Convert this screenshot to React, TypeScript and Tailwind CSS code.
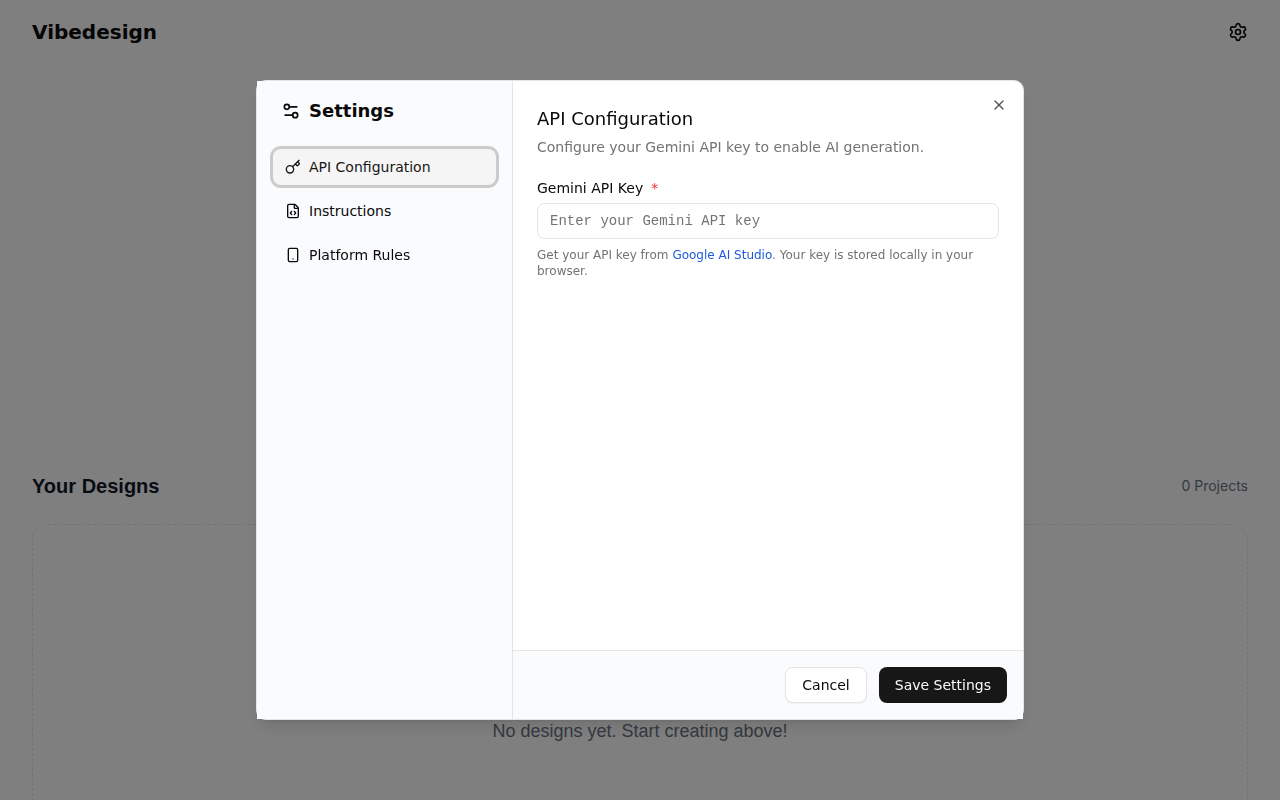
import { useState } from "react";
import { FileCode, Key, Settings, Settings2, Smartphone, X } from "lucide-react";
import clsx from "clsx";

const tabs = [
  { id: "api", label: "API Configuration", icon: Key },
  { id: "instructions", label: "Instructions", icon: FileCode },
  { id: "platform", label: "Platform Rules", icon: Smartphone },
];

const HomePage = () => {
  return (
    <div className="flex h-screen flex-col overflow-hidden bg-white">
      <header className="flex h-16 shrink-0 items-center justify-between px-8">
        <h1 className="text-xl font-bold text-neutral-950">Vibedesign</h1>
        <button type="button" aria-label="Open settings">
          <Settings size={20} className="text-neutral-950" />
        </button>
      </header>
      <div className="h-[408px] shrink-0" />
      <section className="px-8 font-['Liberation_Sans',sans-serif]">
        <div className="mb-6 flex items-center justify-between">
          <h2 className="text-xl font-bold text-gray-900">Your Designs</h2>
          <span className="font-['Inter',sans-serif] text-sm text-gray-500">
            0 Projects
          </span>
        </div>
        <div className="flex h-[414px] items-center justify-center rounded-2xl border border-dashed border-gray-200">
          <p className="text-lg text-gray-500">
            No designs yet. Start creating above!
          </p>
        </div>
      </section>
    </div>
  );
};

const SettingsDialog = () => {
  const [activeTab, setActiveTab] = useState("api");
  const [apiKey, setApiKey] = useState("");

  return (
    <div
      role="dialog"
      aria-labelledby="settings-title"
      className="relative flex h-[80vh] w-full max-w-3xl rounded-[10px] border border-neutral-200 bg-white shadow-lg"
    >
      <aside className="w-64 shrink-0 border-r border-neutral-200 bg-[#fafbfd] p-4">
        <div className="mb-6 flex items-center gap-2 px-2">
          <Settings2 size={20} />
          <h2 id="settings-title" className="text-lg font-bold">
            Settings
          </h2>
        </div>
        <nav className="flex flex-col gap-2">
          {tabs.map(({ id, label, icon: Icon }) => (
            <button
              key={id}
              type="button"
              onClick={() => setActiveTab(id)}
              className={clsx(
                "flex h-9 items-center gap-2 rounded-lg px-3 text-sm font-medium",
                activeTab === id &&
                  "bg-neutral-100 text-neutral-900 ring-3 ring-[#cbcbcb]"
              )}
            >
              <Icon size={16} />
              {label}
            </button>
          ))}
        </nav>
      </aside>

      <div className="flex min-w-0 flex-1 flex-col">
        <div className="flex-1 p-6">
          <h3 className="text-lg font-medium">API Configuration</h3>
          <p className="mt-1 text-sm text-neutral-500">
            Configure your Gemini API key to enable AI generation.
          </p>
          <div className="mt-6 flex flex-col gap-2">
            <label
              htmlFor="api-key"
              className="flex gap-2 text-sm leading-none font-medium"
            >
              Gemini API Key <span className="text-red-500">*</span>
            </label>
            <input
              id="api-key"
              type="password"
              value={apiKey}
              onChange={(e) => setApiKey(e.target.value)}
              placeholder="Enter your Gemini API key"
              className="h-9 w-full rounded-lg border border-neutral-200 px-3 font-['Liberation_Mono',monospace] text-sm placeholder:text-neutral-500"
            />
            <p className="text-xs text-neutral-500">
              Get your API key from{" "}
              <a href="#" className="text-[#1d5bdb]">
                Google AI Studio
              </a>
              . Your key is stored locally in your browser.
            </p>
          </div>
        </div>
        <div className="flex justify-end gap-3 border-t border-neutral-200 bg-[#fafbfd] p-4">
          <button
            type="button"
            className="h-9 rounded-lg border border-neutral-200 bg-white px-4 text-sm font-medium shadow-xs"
          >
            Cancel
          </button>
          <button
            type="button"
            className="h-9 rounded-lg bg-neutral-900 px-4 text-sm font-medium text-neutral-50"
          >
            Save Settings
          </button>
        </div>
      </div>

      <button
        type="button"
        aria-label="Close"
        className="absolute top-4 right-4 opacity-70"
      >
        <X size={16} />
      </button>
    </div>
  );
};

const App = () => {
  return (
    <div className="font-['DejaVu_Sans',sans-serif] text-neutral-950">
      <HomePage />
      <div className="fixed inset-0 flex items-center justify-center bg-black/50">
        <SettingsDialog />
      </div>
    </div>
  );
};

export default App;
